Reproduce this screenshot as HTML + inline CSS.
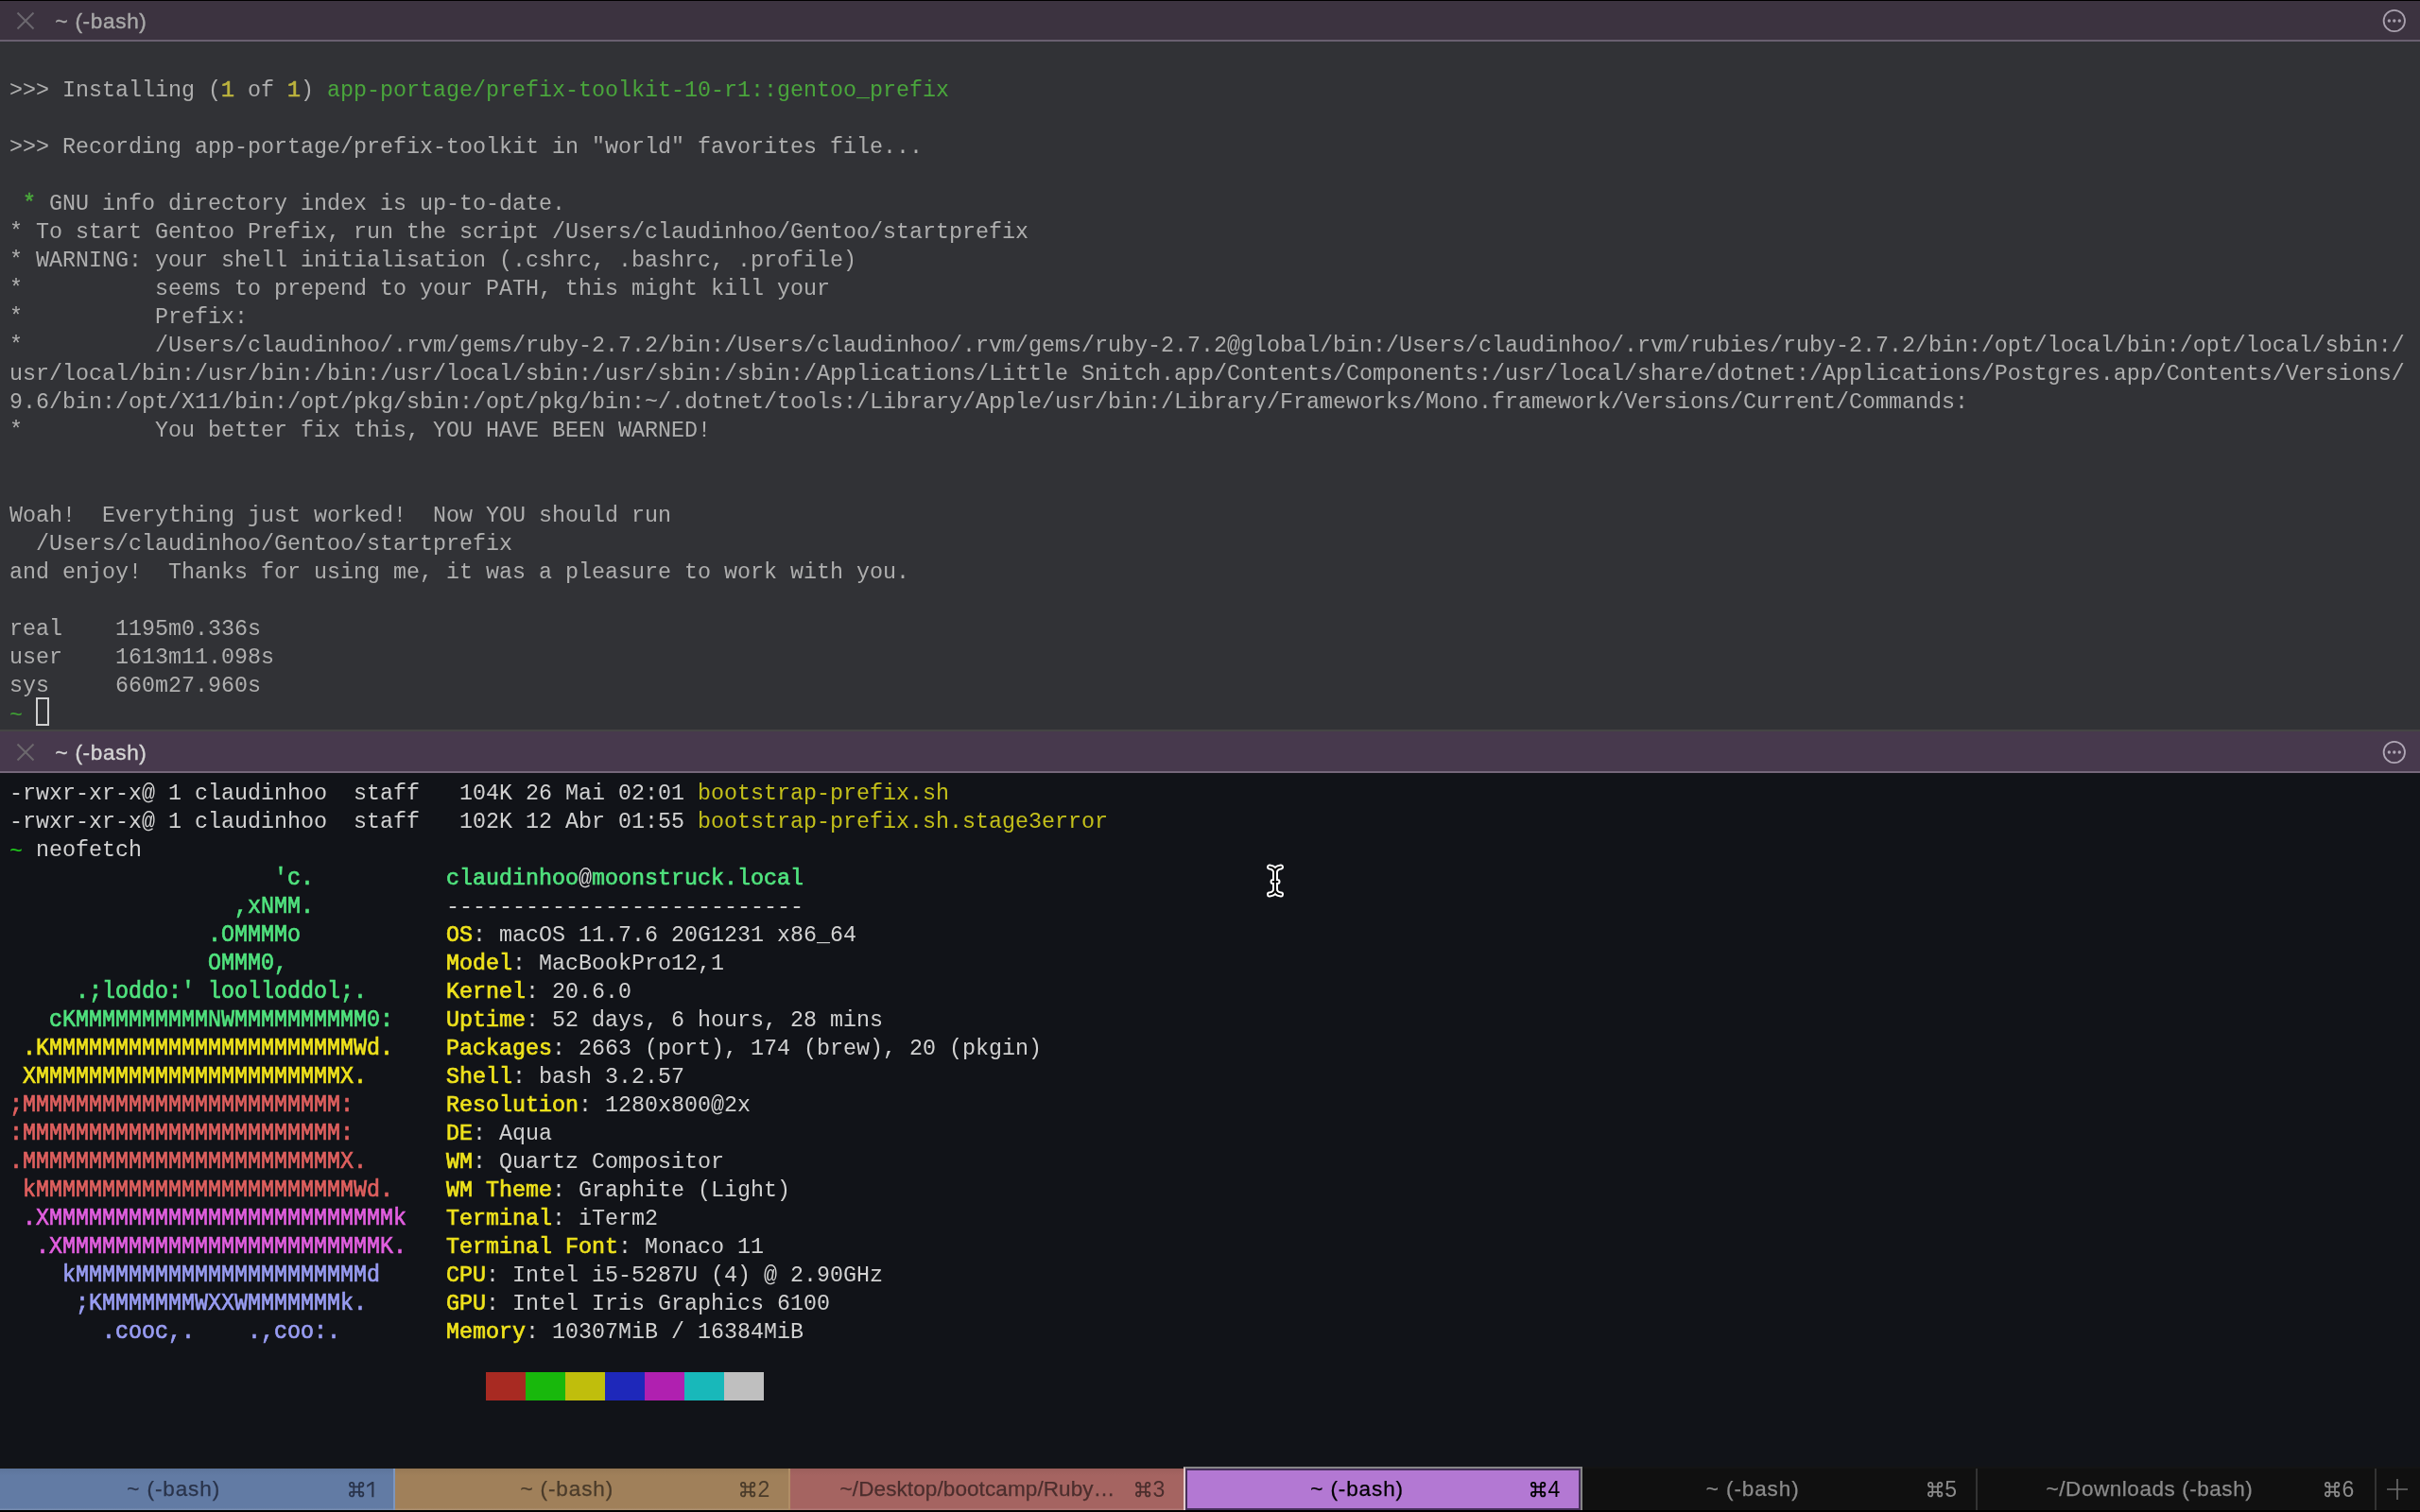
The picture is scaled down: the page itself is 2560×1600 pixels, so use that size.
<!DOCTYPE html>
<html><head><meta charset="utf-8"><title>iTerm2</title>
<style>
html,body{margin:0;padding:0;background:#000;}
body{width:2560px;height:1600px;position:relative;overflow:hidden;font-family:"Liberation Mono",monospace;}
.abs{position:absolute;left:0;width:2560px;}
#L{position:absolute;left:0;top:0;width:2560px;height:1600px;will-change:transform;}
#top{top:0;height:1px;background:#000;}
#tb1{top:1px;height:41px;background:#3c3340;}
#bd1{top:42px;height:2px;background:#696070;}
#p1{top:44px;height:728px;background:#313236;}
#dv{top:772px;height:2px;background:#444444;}
#tb2{top:774px;height:42px;background:#47394d;}
#bd2{top:816px;height:2px;background:#75677a;}
#p2{top:818px;height:736px;background:#111318;}
#tabbar{top:1552px;height:46px;background:#101010;border-top:2px solid #141414;box-sizing:border-box;}
#bot{top:1598px;height:2px;background:#000;}
.r{position:absolute;left:10px;height:30px;line-height:30px;font-size:23.33px;white-space:pre;letter-spacing:0;}
.a{color:#afafaf;}
.c{color:#d2d2d2;}
.b{font-weight:normal;-webkit-text-stroke:0.65px currentColor;}
.y1{color:#bdb43e;} .g1{color:#4aa63c;} .pg1{color:#3f9d35;position:relative;top:2.4px;}
.y2{color:#c4c01a;} .pg2{color:#1fc71b;position:relative;top:2.4px;} .f2{color:#d2d2d2;}
.lg{color:#50e37e;} .ly{color:#f0e31c;} .lr{color:#e0605f;} .lm{color:#e35fe0;} .lb{color:#999df3;}
.tt{position:absolute;left:58.6px;font-family:"Liberation Sans",sans-serif;font-size:22.5px;line-height:26px;height:26px;white-space:pre;letter-spacing:0.7px;-webkit-text-stroke:0.4px currentColor;}
svg{position:absolute;overflow:visible;}
.tab{position:absolute;top:1554px;height:44px;font-family:"Liberation Sans",sans-serif;font-size:22.5px;white-space:pre;}
.tg{background-image:linear-gradient(to bottom,rgba(0,0,0,.07) 0,rgba(0,0,0,.03) 3px,rgba(0,0,0,0) 8px,rgba(255,255,255,0) 42px,rgba(255,255,255,.12) 43px);}
.tl{position:absolute;top:9.4px;line-height:26px;height:26px;-webkit-text-stroke:0.25px currentColor;}
.tc{position:absolute;top:0;height:44px;}
.tn{position:absolute;left:18.6px;top:9.4px;font-size:23px;line-height:26px;}
.one{left:19.2px;top:14.1px;width:7.4px;height:16.2px;fill:currentColor;}
.cmd{left:0;top:14.1px;width:16.3px;height:16.3px;fill:none;stroke:currentColor;stroke-width:1.75;}
.t1{background-color:#627ba4;color:#29334a;}
.t2{background-color:#a0805a;color:#4a3b2a;}
.t3{background-color:#a56461;color:#4b2e2d;}
.t4{background-color:#b378d3;color:#000;top:1556px;height:40px;}
.t4 .tl{top:7.4px;} .t4 .tn{top:7.4px;} .t4 .cmd{top:12.1px;}
.t5{color:#8b8b8b;} .t6{color:#8b8b8b;}
.sep{position:absolute;top:1554px;height:44px;width:2px;}
.cur{position:absolute;box-sizing:border-box;left:38px;top:738px;width:14px;height:30px;border:2px solid #d0d0d0;}
.lgo{display:inline-block;transform:scaleY(1.08);transform-origin:0 21.2px;}
.blk{position:absolute;top:1452px;height:30px;width:42px;}
</style></head>
<body>
<div class="abs" id="top"></div>
<div class="abs" id="tb1"></div>
<div class="abs" id="bd1"></div>
<div class="abs" id="p1"></div>
<div class="abs" id="dv"></div>
<div class="abs" id="tb2"></div>
<div class="abs" id="bd2"></div>
<div class="abs" id="p2"></div>
<div class="abs" id="tabbar"></div>
<div class="abs" id="bot"></div>
<div id="L">
<svg style="left:17px;top:12px;width:20px;height:20px" viewBox="0 0 20 20"><path d="M1.5 1.5L18.5 18.5M18.5 1.5L1.5 18.5" stroke="#6c686f" stroke-width="2" fill="none"/></svg>
<div class="tt" style="top:10px;color:#a8a8a8">~ (-bash)</div>
<svg style="left:2520px;top:9px;width:26px;height:26px" viewBox="0 0 26 26"><circle cx="12.8" cy="13" r="11.2" fill="none" stroke="#a9a1ae" stroke-width="1.8"/><circle cx="7.35" cy="13" r="1.7" fill="#a9a1ae"/><circle cx="12.8" cy="13" r="1.7" fill="#a9a1ae"/><circle cx="18.25" cy="13" r="1.7" fill="#a9a1ae"/></svg>
<svg style="left:17px;top:786px;width:20px;height:20px" viewBox="0 0 20 20"><path d="M1.5 1.5L18.5 18.5M18.5 1.5L1.5 18.5" stroke="#6c686d" stroke-width="2" fill="none"/></svg>
<div class="tt" style="top:784px;color:#d4d4d4">~ (-bash)</div>
<svg style="left:2520px;top:783px;width:26px;height:26px" viewBox="0 0 26 26"><circle cx="12.8" cy="13" r="11.2" fill="none" stroke="#b0a7b6" stroke-width="1.8"/><circle cx="7.35" cy="13" r="1.7" fill="#b0a7b6"/><circle cx="12.8" cy="13" r="1.7" fill="#b0a7b6"/><circle cx="18.25" cy="13" r="1.7" fill="#b0a7b6"/></svg>
<div class="a">
<div class="r a" style="top:80.8px">&gt;&gt;&gt; Installing (<span class="y1 b">1</span> of <span class="y1 b">1</span>) <span class="g1">app-portage/prefix-toolkit-10-r1::gentoo_prefix</span></div>
<div class="r a" style="top:140.8px">&gt;&gt;&gt; Recording app-portage/prefix-toolkit in "world" favorites file...</div>
<div class="r a" style="top:200.8px"> <span class="g1 b">*</span> GNU info directory index is up-to-date.</div>
<div class="r a" style="top:230.8px">* To start Gentoo Prefix, run the script /Users/claudinhoo/Gentoo/startprefix</div>
<div class="r a" style="top:260.8px">* WARNING: your shell initialisation (.cshrc, .bashrc, .profile)</div>
<div class="r a" style="top:290.8px">*          seems to prepend to your PATH, this might kill your</div>
<div class="r a" style="top:320.8px">*          Prefix:</div>
<div class="r a" style="top:350.8px">*          /Users/claudinhoo/.rvm/gems/ruby-2.7.2/bin:/Users/claudinhoo/.rvm/gems/ruby-2.7.2@global/bin:/Users/claudinhoo/.rvm/rubies/ruby-2.7.2/bin:/opt/local/bin:/opt/local/sbin:/</div>
<div class="r a" style="top:380.8px">usr/local/bin:/usr/bin:/bin:/usr/local/sbin:/usr/sbin:/sbin:/Applications/Little Snitch.app/Contents/Components:/usr/local/share/dotnet:/Applications/Postgres.app/Contents/Versions/</div>
<div class="r a" style="top:410.8px">9.6/bin:/opt/X11/bin:/opt/pkg/sbin:/opt/pkg/bin:~/.dotnet/tools:/Library/Apple/usr/bin:/Library/Frameworks/Mono.framework/Versions/Current/Commands:</div>
<div class="r a" style="top:440.8px">*          You better fix this, YOU HAVE BEEN WARNED!</div>
<div class="r a" style="top:530.8px">Woah!  Everything just worked!  Now YOU should run</div>
<div class="r a" style="top:560.8px">  /Users/claudinhoo/Gentoo/startprefix</div>
<div class="r a" style="top:590.8px">and enjoy!  Thanks for using me, it was a pleasure to work with you.</div>
<div class="r a" style="top:650.8px">real    1195m0.336s</div>
<div class="r a" style="top:680.8px">user    1613m11.098s</div>
<div class="r a" style="top:710.8px">sys     660m27.960s</div>
<div class="r a" style="top:740.8px"><span class="pg1">~</span></div>
</div>
<div class="cur"></div>
<div class="c">
<div class="r c" style="top:824.8px">-rwxr-xr-x@ 1 claudinhoo  staff   104K 26 Mai 02:01 <span class="y2">bootstrap-prefix.sh</span></div>
<div class="r c" style="top:854.8px">-rwxr-xr-x@ 1 claudinhoo  staff   102K 12 Abr 01:55 <span class="y2">bootstrap-prefix.sh.stage3error</span></div>
<div class="r c" style="top:884.8px"><span class="pg2">~</span> neofetch</div>
<div class="r c" style="top:914.8px"><span class="lg b lgo">                    'c.</span>          <span class="lg b">claudinhoo</span><span class="f2">@</span><span class="lg b">moonstruck.local</span></div>
<div class="r c" style="top:944.8px"><span class="lg b lgo">                 ,xNMM.</span>          ---------------------------</div>
<div class="r c" style="top:974.8px"><span class="lg b lgo">               .OMMMMo</span>           <span class="ly b">OS</span>: macOS 11.7.6 20G1231 x86_64</div>
<div class="r c" style="top:1004.8px"><span class="lg b lgo">               OMMM0,</span>            <span class="ly b">Model</span>: MacBookPro12,1</div>
<div class="r c" style="top:1034.8px"><span class="lg b lgo">     .;loddo:' loolloddol;.</span>      <span class="ly b">Kernel</span>: 20.6.0</div>
<div class="r c" style="top:1064.8px"><span class="lg b lgo">   cKMMMMMMMMMMNWMMMMMMMMMM0:</span>    <span class="ly b">Uptime</span>: 52 days, 6 hours, 28 mins</div>
<div class="r c" style="top:1094.8px"><span class="ly b lgo"> .KMMMMMMMMMMMMMMMMMMMMMMMWd.</span>    <span class="ly b">Packages</span>: 2663 (port), 174 (brew), 20 (pkgin)</div>
<div class="r c" style="top:1124.8px"><span class="ly b lgo"> XMMMMMMMMMMMMMMMMMMMMMMMX.</span>      <span class="ly b">Shell</span>: bash 3.2.57</div>
<div class="r c" style="top:1154.8px"><span class="lr b lgo">;MMMMMMMMMMMMMMMMMMMMMMMM:</span>       <span class="ly b">Resolution</span>: 1280x800@2x</div>
<div class="r c" style="top:1184.8px"><span class="lr b lgo">:MMMMMMMMMMMMMMMMMMMMMMMM:</span>       <span class="ly b">DE</span>: Aqua</div>
<div class="r c" style="top:1214.8px"><span class="lr b lgo">.MMMMMMMMMMMMMMMMMMMMMMMMX.</span>      <span class="ly b">WM</span>: Quartz Compositor</div>
<div class="r c" style="top:1244.8px"><span class="lr b lgo"> kMMMMMMMMMMMMMMMMMMMMMMMMWd.</span>    <span class="ly b">WM Theme</span>: Graphite (Light)</div>
<div class="r c" style="top:1274.8px"><span class="lm b lgo"> .XMMMMMMMMMMMMMMMMMMMMMMMMMMk</span>   <span class="ly b">Terminal</span>: iTerm2</div>
<div class="r c" style="top:1304.8px"><span class="lm b lgo">  .XMMMMMMMMMMMMMMMMMMMMMMMMK.</span>   <span class="ly b">Terminal Font</span>: Monaco 11</div>
<div class="r c" style="top:1334.8px"><span class="lb b lgo">    kMMMMMMMMMMMMMMMMMMMMMMd</span>     <span class="ly b">CPU</span>: Intel i5-5287U (4) @ 2.90GHz</div>
<div class="r c" style="top:1364.8px"><span class="lb b lgo">     ;KMMMMMMMWXXWMMMMMMMk.</span>      <span class="ly b">GPU</span>: Intel Iris Graphics 6100</div>
<div class="r c" style="top:1394.8px"><span class="lb b lgo">       .cooc,.    .,coo:.</span>        <span class="ly b">Memory</span>: 10307MiB / 16384MiB</div>
</div>
<div class="blk" style="left:514px;background:#a82a22"></div><div class="blk" style="left:556px;background:#18b80c"></div><div class="blk" style="left:598px;background:#c0be0c"></div><div class="blk" style="left:640px;background:#1e28ba"></div><div class="blk" style="left:682px;background:#b020b0"></div><div class="blk" style="left:724px;background:#18b8ba"></div><div class="blk" style="left:766px;background:#bfbfbf"></div>
<div class="sep" style="left:416px;background:#7c96be"></div>
<div class="sep" style="left:834px;background:#b08e66"></div>
<div class="sep" style="left:2090px;background:#333"></div>
<div class="sep" style="left:2512px;background:#333"></div>
<div style="position:absolute;left:1252px;top:1552px;width:422px;height:46px;box-sizing:border-box;border-top:2px solid #868686;border-right:2px solid #858585;border-left:2px solid #e3cdcd;background:#46305a"></div>
<div class="tab t1 tg" style="left:0px;width:416px"><span class="tl" style="left:134.3px;letter-spacing:0.90px">~ (-bash)</span><span class="tc" style="left:368.8px"><svg class="cmd" viewBox="0 0 16.3 16.3"><path d="M5.3 13.2V3.1A2.2 2.2 0 1 0 3.1 5.300H13.2A2.2 2.2 0 1 0 11 3.1V13.2A2.2 2.2 0 1 0 13.2 11H3.1A2.2 2.2 0 1 0 5.3 13.200Z"/></svg><svg class="one" viewBox="0 0 7.4 16.2"><path d="M7.4 0V16.2H5.300V2.5L0.2 5.9V3.6L5.500 0Z"/></svg></span></div>
<div class="tab t2 tg" style="left:418px;width:416px"><span class="tl" style="left:132.4px;letter-spacing:0.90px">~ (-bash)</span><span class="tc" style="left:365.0px"><svg class="cmd" viewBox="0 0 16.3 16.3"><path d="M5.3 13.2V3.1A2.2 2.2 0 1 0 3.1 5.300H13.2A2.2 2.2 0 1 0 11 3.1V13.2A2.2 2.2 0 1 0 13.2 11H3.1A2.2 2.2 0 1 0 5.3 13.200Z"/></svg><span class="tn">2</span></span></div>
<div class="tab t3 tg" style="left:836px;width:416px"><span class="tl" style="left:52.6px;letter-spacing:0.10px">~/Desktop/bootcamp/Ruby…</span><span class="tc" style="left:364.8px"><svg class="cmd" viewBox="0 0 16.3 16.3"><path d="M5.3 13.2V3.1A2.2 2.2 0 1 0 3.1 5.300H13.2A2.2 2.2 0 1 0 11 3.1V13.2A2.2 2.2 0 1 0 13.2 11H3.1A2.2 2.2 0 1 0 5.3 13.200Z"/></svg><span class="tn">3</span></span></div>
<div class="tab t4" style="left:1256px;width:414px"><span class="tl" style="left:130.2px;letter-spacing:0.90px">~ (-bash)</span><span class="tc" style="left:362.8px"><svg class="cmd" viewBox="0 0 16.3 16.3"><path d="M5.3 13.2V3.1A2.2 2.2 0 1 0 3.1 5.300H13.2A2.2 2.2 0 1 0 11 3.1V13.2A2.2 2.2 0 1 0 13.2 11H3.1A2.2 2.2 0 1 0 5.3 13.200Z"/></svg><span class="tn">4</span></span></div>
<div class="tab t5" style="left:1674px;width:416px"><span class="tl" style="left:130.8px;letter-spacing:0.90px">~ (-bash)</span><span class="tc" style="left:364.6px"><svg class="cmd" viewBox="0 0 16.3 16.3"><path d="M5.3 13.2V3.1A2.2 2.2 0 1 0 3.1 5.300H13.2A2.2 2.2 0 1 0 11 3.1V13.2A2.2 2.2 0 1 0 13.2 11H3.1A2.2 2.2 0 1 0 5.3 13.200Z"/></svg><span class="tn">5</span></span></div>
<div class="tab t6" style="left:2092px;width:420px"><span class="tl" style="left:72.6px;letter-spacing:0.55px">~/Downloads (-bash)</span><span class="tc" style="left:366.8px"><svg class="cmd" viewBox="0 0 16.3 16.3"><path d="M5.3 13.2V3.1A2.2 2.2 0 1 0 3.1 5.300H13.2A2.2 2.2 0 1 0 11 3.1V13.2A2.2 2.2 0 1 0 13.2 11H3.1A2.2 2.2 0 1 0 5.3 13.200Z"/></svg><span class="tn">6</span></span></div>
<svg style="left:2525px;top:1565px;width:22px;height:22px" viewBox="0 0 22 22"><path d="M11 0V22M0 11H22" stroke="#6c6c6c" stroke-width="1.6" fill="none"/></svg>
<svg style="left:1337px;top:910px;width:24px;height:44px" viewBox="0 0 24 44"><path id="ib" d="M6 7.5C9.5 8 12 9.5 12 13V31C12 34.5 9.5 36 6 36.5M18 7.5C14.500 8 12 9.5 12 13M12 31C12 34.5 14.5 36 18 36.500M9.500 23H14.500" fill="none" stroke="#fff" stroke-width="6" stroke-linecap="round" stroke-linejoin="round"/><path d="M6 7.5C9.5 8 12 9.5 12 13V31C12 34.5 9.5 36 6 36.5M18 7.5C14.500 8 12 9.5 12 13M12 31C12 34.5 14.5 36 18 36.500M9.500 23H14.500" fill="none" stroke="#000" stroke-width="2" stroke-linecap="round" stroke-linejoin="round"/></svg>
</div>
</body></html>
